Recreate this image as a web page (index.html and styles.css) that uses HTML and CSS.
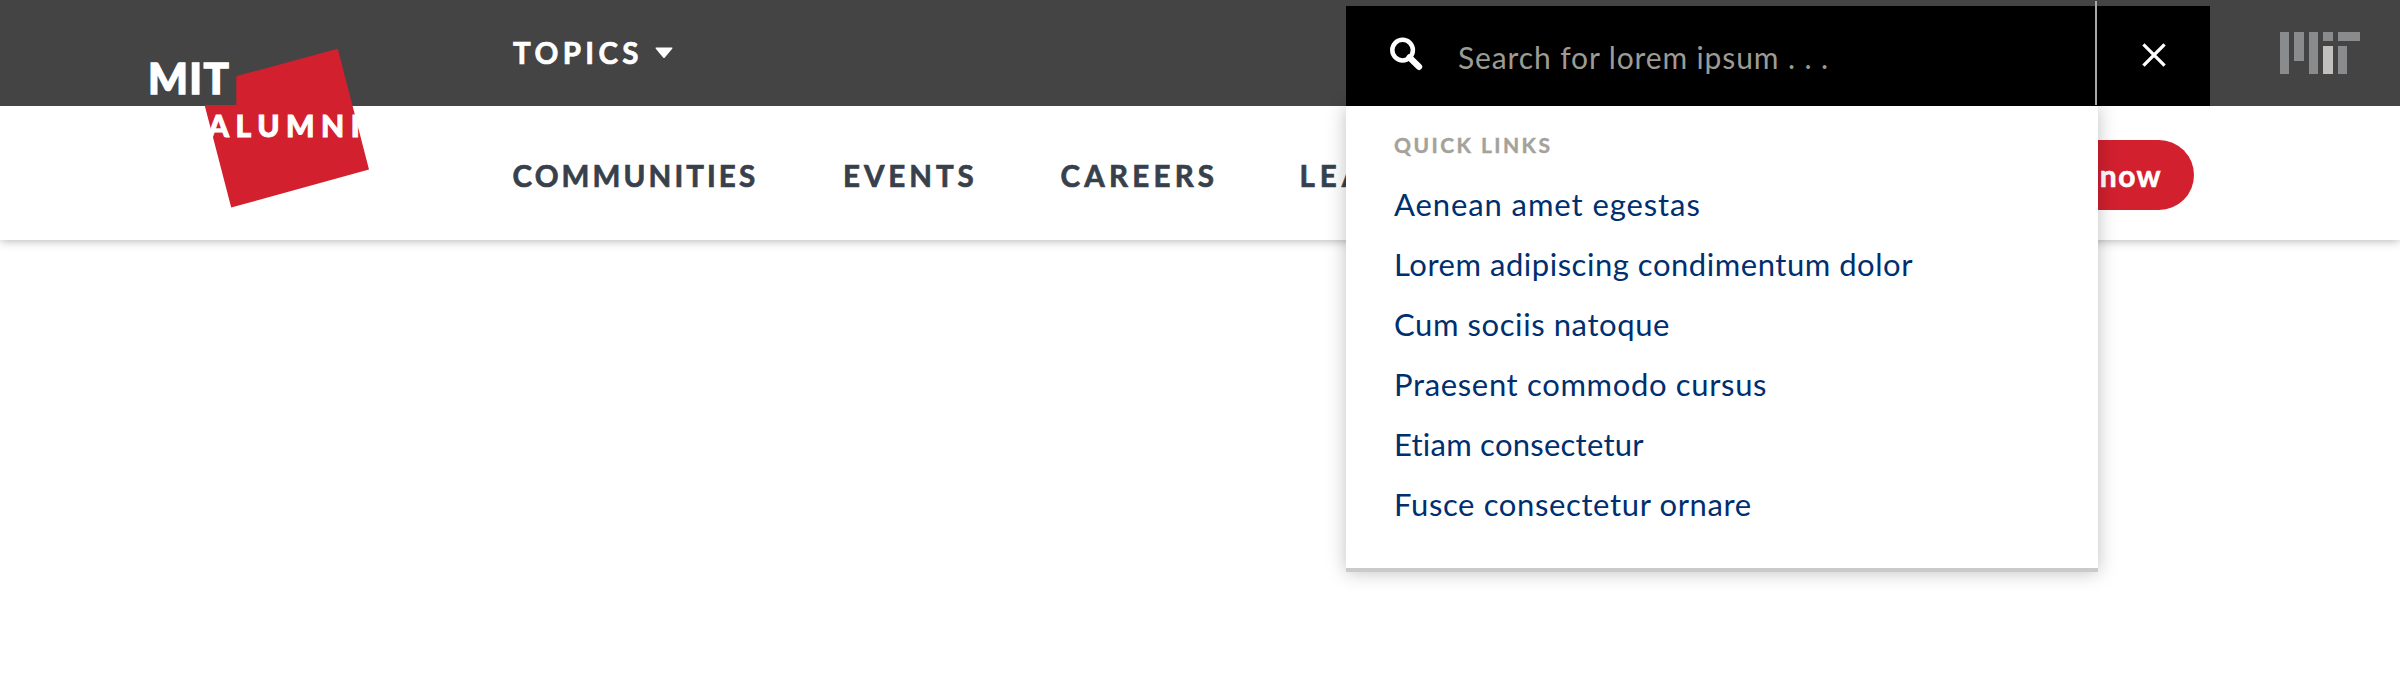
FILE: index.html
```html
<!DOCTYPE html>
<html lang="en">
<head>
<meta charset="utf-8">
<title>MIT Alumni</title>
<link rel="stylesheet" href="styles.css">
</head>
<body>
<header class="site-header">
  <div class="topbar">
    <a class="topics">TOPICS
      <svg class="caret" width="18" height="12" viewBox="0 0 18 12"><path d="M1.2 0.5H16.8Q18 .6 17.2 1.7L9.9 10.4Q9 11.4 8.1 10.4L.8 1.7Q0 .6 1.2 .5Z" fill="#fff"/></svg>
    </a>
    <svg class="mit-mark" width="80" height="42" viewBox="0 0 80 42" shape-rendering="crispEdges">
      <g fill="#8a8b8c">
        <path d="M0 0h9v42H0zM14 0h10v29H14zM29 0h9v42h-9zM43 0h10v9H43zM58 0h22v9H58zM58 14h9v28h-9z"/>
      </g>
      <path d="M43 14h10v28H43z" fill="#c2c0bf"/>
    </svg>
  </div>
  <nav class="mainnav">
    <div class="nav-links">
      <a class="nav-link communities">COMMUNITIES</a>
      <a class="nav-link events">EVENTS</a>
      <a class="nav-link careers">CAREERS</a>
      <a class="nav-link learn">LEARN</a>
    </div>
    <a class="give">Give now</a>
  </nav>

  <svg class="logo" width="250" height="190" viewBox="140 30 250 190">
    <path d="M236.3 76.2 337.8 48.7 369 169.6 231.2 207.6 204.6 105H236.3Z" fill="#d2202f"/>
    <text class="logo-mit" x="148" y="94.4">MIT</text>
    <text class="logo-alumni" x="208" y="137">ALUMNI</text>
  </svg>

  <section class="search">
    <div class="panel">
      <h2 class="panel-title">QUICK LINKS</h2>
      <a class="quick aenean">Aenean amet egestas</a>
      <a class="quick lorem">Lorem adipiscing condimentum dolor</a>
      <a class="quick cum">Cum sociis natoque</a>
      <a class="quick praesent">Praesent commodo cursus</a>
      <a class="quick etiam">Etiam consectetur</a>
      <a class="quick fusce">Fusce consectetur ornare</a>
    </div>
    <div class="search-bar">
      <svg class="glass" width="33" height="34" viewBox="0 0 33 34" fill="none" stroke="#fff">
        <circle cx="12.6" cy="13.1" r="10.3" stroke-width="4.5"/>
        <path d="M19.5 20.5 29 29.8" stroke-width="6.4" stroke-linecap="round"/>
      </svg>
      <span class="placeholder">Search for lorem ipsum . . .</span>
      <svg class="close" width="24" height="24" viewBox="0 0 24 24" fill="none" stroke="#fff" stroke-width="3.3" stroke-linecap="square"><path d="M2.6 2.6 21.4 21.4M21.4 2.6 2.6 21.4"/></svg>
    </div>
    <span class="divider"></span>
  </section>
</header>
</body>
</html>
```
FILE: styles.css
```css
* { box-sizing: border-box; }
body {
  margin: 0;
  min-height: 682px;
  background: #fff;
  font-family: Lato, "Open Sans", sans-serif;
  font-kerning: normal;
}
.site-header {
  position: relative;
  height: 240px;
  box-shadow: 0 0 10px rgba(0, 0, 0, .35);
}
.topbar {
  height: 106px;
  padding: 0 40px 0 513px;
  background: #444;
  display: flex;
  justify-content: space-between;
  align-items: flex-start;
}
.topics {
  display: flex;
  align-items: center;
  gap: 12.5px;
  padding-top: 35px;
  color: #fff;
  font-size: 29.5px;
  line-height: 36px;
  font-weight: 700;
  letter-spacing: 4.4px;
  -webkit-text-stroke: .7px currentColor;
}
.mit-mark { margin-top: 32px; }
.mainnav {
  height: 134px;
  padding: 0 206px 0 512.5px;
  background: #fff;
  display: flex;
  justify-content: space-between;
  align-items: center;
}
.nav-links {
  display: grid;
  grid-template-columns: 330.5px 217.5px 239px auto;
  padding-top: 5px;
}
.nav-link {
  color: #38404c;
  font-size: 29.5px;
  line-height: 36px;
  font-weight: 700;
  -webkit-text-stroke: .7px currentColor;
}
.communities { letter-spacing: 3.1px; }
.events { letter-spacing: 3.95px; }
.careers { letter-spacing: 4.25px; }
.learn { letter-spacing: 5px; }
.give {
  height: 70px;
  margin-top: 4px;
  padding: 0 32px;
  border-radius: 35px;
  background: #d2202f;
  color: #fff;
  font-size: 30px;
  line-height: 71px;
  font-weight: 700;
  letter-spacing: 1.4px;
  -webkit-text-stroke: .6px currentColor;
}
.logo {
  position: absolute;
  left: 140px;
  top: 30px;
  fill: #fff;
  stroke-width: 0;
  font-weight: 900;
}
.logo-mit { font-size: 42px; letter-spacing: 1.4px; stroke: #fff; stroke-width: 1.3px; }
.logo-alumni { font-size: 30px; letter-spacing: 6.5px; stroke: #fff; stroke-width: .9px; }

/* Search overlay, opened on top of both header rows */
.search {
  position: absolute;
  left: 1346px;
  top: 0;
  width: 864px;
  display: grid;
  grid-template-rows: 6px 100px auto;
}
.panel {
  grid-area: 3 / 1;
  width: 752px;
  height: 466px;
  padding: 26px 48px 0;
  background: #fff;
  border-bottom: 4px solid #c9cac9;
  box-shadow: 0 0 18px rgba(0, 0, 0, .25);
  display: flex;
  flex-direction: column;
}
.panel-title {
  margin: 0 0 16px;
  color: #a4a29a;
  font-size: 21px;
  line-height: 26px;
  font-weight: 700;
  letter-spacing: 2.45px;
  -webkit-text-stroke: .4px currentColor;
}
.quick {
  color: #002f6f;
  font-size: 31px;
  line-height: 60px;
  white-space: nowrap;
}
.aenean { letter-spacing: .91px; }
.lorem { letter-spacing: .53px; }
.cum { letter-spacing: .59px; }
.praesent { letter-spacing: .66px; }
.etiam { letter-spacing: .25px; }
.fusce { letter-spacing: .63px; }
.search-bar {
  grid-area: 2 / 1;
  position: relative;
  padding: 0 44px;
  background: #000;
  display: flex;
  align-items: center;
}
.glass { margin-bottom: 4px; }
.placeholder {
  margin-left: 35px;
  padding-top: 1px;
  color: #9c9b94;
  font-size: 30px;
  line-height: 36px;
  letter-spacing: .88px;
  white-space: nowrap;
}
.close { margin: 0 0 2px auto; }
.divider {
  position: absolute;
  left: 749px;
  top: 1px;
  width: 2px;
  height: 104px;
  background: #a9a9a6;
}
```
